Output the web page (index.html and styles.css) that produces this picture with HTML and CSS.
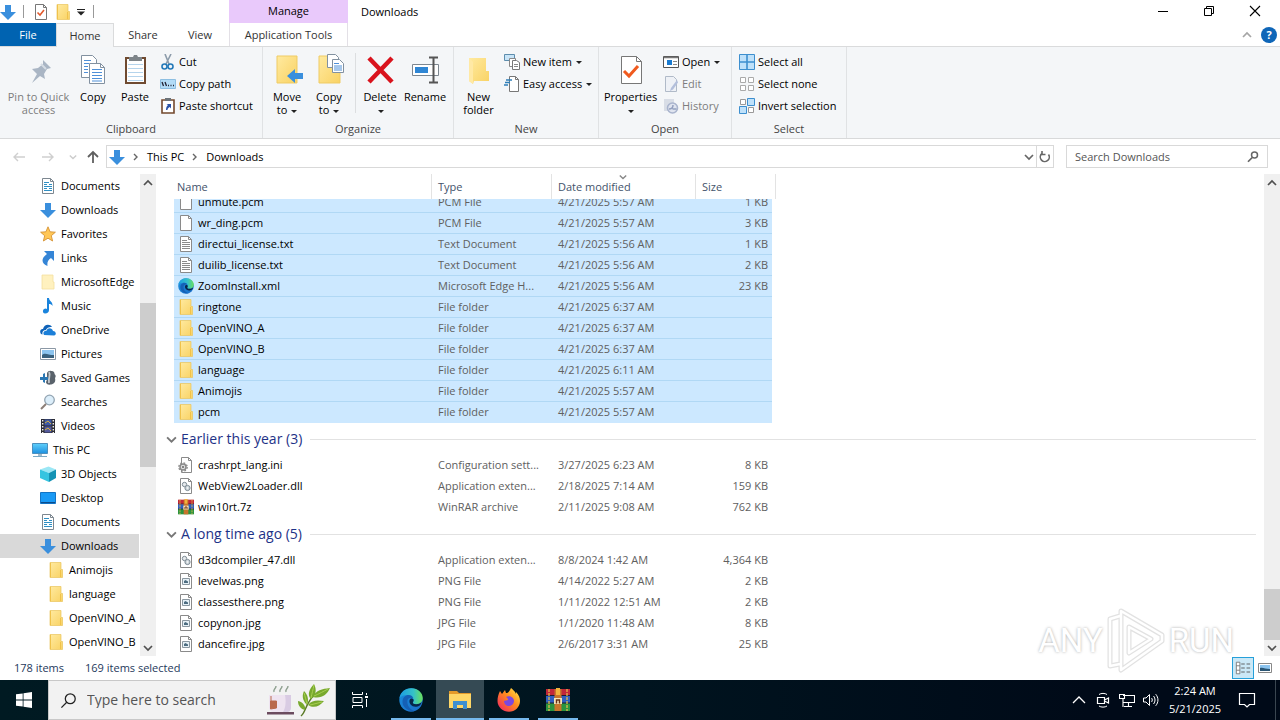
FILE: index.html
```
<!DOCTYPE html>
<html lang="en">
<head>
	<meta charset="UTF-8">
	<title>Downloads</title>
	<link rel="stylesheet" href="styles.css">
</head>
<body>
	<svg class="defs" aria-hidden="true">
		<defs>
			<linearGradient id="g-folder" x1="0" y1="0" x2="1" y2="1"><stop offset="0" stop-color="#ffeaa0"/><stop offset="1" stop-color="#f9d263"/></linearGradient>
			<linearGradient id="g-edge" x1="0" y1="0" x2="1" y2="0"><stop offset="0" stop-color="#1b9de2"/><stop offset=".6" stop-color="#35c1c8"/><stop offset="1" stop-color="#6be15c"/></linearGradient>
			<linearGradient id="g-edge2" x1="0" y1="0" x2="1" y2="1"><stop offset="0" stop-color="#1a8fdc"/><stop offset="1" stop-color="#1a6cc8"/></linearGradient>
			<linearGradient id="g-fox" x1="1" y1="0" x2="0" y2="1"><stop offset="0" stop-color="#fff04a"/><stop offset=".45" stop-color="#ff8a1e"/><stop offset="1" stop-color="#f01b6a"/></linearGradient>
			<linearGradient id="g-sky" x1="0" y1="0" x2="0" y2="1"><stop offset="0" stop-color="#5fd0fb"/><stop offset="1" stop-color="#1e90e0"/></linearGradient>
		</defs>
		<symbol id="i-down" viewBox="0 0 16 16"><path d="M5 1h6v7h5l-8 8-8-8h5z" fill="#3a8fdd"/></symbol>
		<symbol id="i-folder" viewBox="0 0 16 16"><path d="M2 .5h11v7h1.500v8H2z" fill="url(#g-folder)" stroke="#eac45c" stroke-width=".7"/><path d="M12.500 8v7M2.500 1v14" stroke="#f0c24b" stroke-width="1" fill="none"/></symbol>
		<symbol id="i-folder-pale" viewBox="0 0 16 16"><path d="M2 1h11v7h1v7H2z" fill="#fff1bf" stroke="#f4e0a0" stroke-width=".8"/></symbol>
		<symbol id="i-page" viewBox="0 0 16 16"><path d="M2.500.5h8l3 3v12h-11z" fill="#fff" stroke="#8a8a8a"/><path d="M10.500.5v3h3" fill="none" stroke="#8a8a8a"/></symbol>
		<symbol id="i-text" viewBox="0 0 16 16"><path d="M2.500.5h8l3 3v12h-11z" fill="#fff" stroke="#8a8a8a"/><path d="M10.500.5v3h3M4 4.500h5M4 6.500h8M4 8.500h8M4 10.500h8M4 12.500h8" fill="none" stroke="#8a8a8a"/></symbol>
		<symbol id="i-doc" viewBox="0 0 16 16"><path d="M2.500.5h8l3 3v12h-11z" fill="#fff" stroke="#7d8790"/><path d="M10.500.5v3h3" fill="none" stroke="#7d8790"/><path d="M4 4.500h5M4 6.500h3M9 6.500h3M4 8.500h8M4 10.500h3M9 10.500h3M4 12.500h8" stroke="#2f8fc4"/></symbol>
		<symbol id="i-gearpage" viewBox="0 0 16 16"><path d="M3.500.5h7l3 3v12h-10z" fill="#fff" stroke="#8a8a8a"/><path d="M10.500.5v3h3" fill="none" stroke="#8a8a8a"/><circle cx="5" cy="10" r="3" fill="#ddd" stroke="#8a8a8a" stroke-width="1.500"/><circle cx="5" cy="10" r="4.200" fill="none" stroke="#8a8a8a" stroke-width="1.300" stroke-dasharray="1.800 1.500"/><circle cx="5" cy="10" r="1" fill="#666"/></symbol>
		<symbol id="i-dll" viewBox="0 0 16 16"><path d="M2.500.5h8l3 3v12h-11z" fill="#fff" stroke="#8a8a8a"/><path d="M10.500.5v3h3" fill="none" stroke="#8a8a8a"/><circle cx="6.500" cy="6.500" r="2.200" fill="#e5e9ec" stroke="#7e8b94"/><circle cx="9.500" cy="10" r="2.600" fill="#cfd7dc" stroke="#7e8b94"/><circle cx="9.500" cy="10" r=".8" fill="#fff"/></symbol>
		<symbol id="i-image" viewBox="0 0 16 16"><path d="M2.500.5h8l3 3v12h-11z" fill="#fff" stroke="#8a8a8a"/><path d="M10.500.5v3h3" fill="none" stroke="#8a8a8a"/><path d="M4.500 5.500h7v6h-7z" fill="#e6f0f6" stroke="#8a97a0"/><path d="M6 8l1.500-1L10 8.500V10H6z" fill="#4c6c80"/></symbol>
		<symbol id="i-edge" viewBox="0 0 24 24"><circle cx="12" cy="12" r="11.700" fill="url(#g-edge2)"/><path d="M.5 10C1.500 4 6.500.3 12.500.3 19 .3 23.700 5 23.700 10c0 4-3 6.300-6.700 6.300-2.500 0-3.500-1-3.200-2 .8-1 1-1.700.8-2.700C14 8.500 11.500 7 8.500 7 5 7 2 8 .5 10z" fill="url(#g-edge)"/><path d="M8.500 12c-1 5 2.500 10 7.500 11C9 24 3 19 3.500 13c.2-3 2-5 5-6 3-.3 5 1 5.700 3-2.700-.7-5 0-5.700 2z" fill="#1560b5"/><path d="M10.500 12.500c.5-2 2.500-2.500 3.800-1.200.6 1 .3 2-.4 3-.3 1 1 2 3.200 2 2.200 0 4-.7 5.600-2-1 3.500-3.700 4.700-6.200 4.500-4-.3-6.500-3-6-6.300z" fill="#07264a"/></symbol>
		<symbol id="i-rar" viewBox="0 0 24 24"><path d="M0 1h24v7H0z" fill="#c0273a"/><path d="M0 8h24v7H0z" fill="#2f5fc0"/><path d="M0 15h24v8H0z" fill="#2b9440"/><path d="M0 7.500h24M0 15h24" stroke="#1c1c30"/><path d="M3 1v22M21 1v22" stroke="#e3b94a" stroke-width="1.300" stroke-dasharray="3 1"/><path d="M8.500 1h7v22h-7z" fill="#c8752b"/><path d="M10 0h4v7h-4z" fill="#f2b33d"/><path d="M8 10h8v6H8z" fill="#f5e3b6"/><path d="M10.500 15.500V12h3v3.500" fill="none" stroke="#693015" stroke-width="1.400"/></symbol>
		<symbol id="i-star" viewBox="0 0 16 16"><path d="M8 .8l2.100 5 5.300.4-4.100 3.500 1.300 5.300L8 12.200 3.400 15l1.300-5.300L.6 6.200l5.300-.4z" fill="#ffc757" stroke="#d69335" stroke-width=".9"/></symbol>
		<symbol id="i-link" viewBox="0 0 16 16"><path d="M4 1h10v10l-3-3c-3 2-4 4-3.500 8C2 14 0 9 7 4z" fill="#3585d6"/></symbol>
		<symbol id="i-music" viewBox="0 0 16 16"><path d="M7 0h2c0 3 4 3.500 3.500 8-.8-1.500-2-2-3.500-2v6c0 2-1.500 3.500-4 3.500S2.500 12 4 11s2.200-.6 3 0z" fill="#1a84dd"/></symbol>
		<symbol id="i-cloud" viewBox="0 0 16 16"><path d="M1 12C-1 9 1 6.500 3 7c1-5 7-5.500 9-2C8 5 7 6 6 8c-3 0-4 2-3.500 4.500z" fill="#0f62b8"/><path d="M4 13c-1.500-2 0-4.500 2.500-4.200C7.500 5.500 12 5.500 13 9c3 0 4 4 1 4.500z" fill="#1c7fd8"/></symbol>
		<symbol id="i-pic" viewBox="0 0 16 16"><path d="M.5 2.500h15v11H.5z" fill="#fff" stroke="#8b98a5"/><path d="M2 4h12v8H2z" fill="#8cc4ef"/><path d="M2 9c3-3 6 0 12 0v3H2z" fill="#39617e"/></symbol>
		<symbol id="i-games" viewBox="0 0 16 16"><path d="M7 3c1-2 3-2.500 4-2 2-.5 4 1 3.500 3 1.500 1 1.500 3 .5 4 1 4-1 6-4 6.500-3 .5-5-.5-5-2.500 1-2 1-3 1-5z" fill="#59626b"/><path d="M9 2c2 3-1 6 0 11" stroke="#c4cbd1" stroke-width="1.800" fill="none"/><path d="M0 7h3V4l2-1v4h3v3H5v3l-2-1v-2H0z" fill="#2b78b4"/></symbol>
		<symbol id="i-lens" viewBox="0 0 16 16"><circle cx="9.500" cy="6" r="4.800" fill="#dceefa" stroke="#93a5b3" stroke-width="1.300"/><path d="M6 10l-5 5" stroke="#8c7f78" stroke-width="2"/></symbol>
		<symbol id="i-video" viewBox="0 0 16 16"><path d="M1 1h14v14H1z" fill="#2c2c34"/><path d="M4.500 1.500h7v6h-7z" fill="#3d58a8"/><path d="M4.500 8.500h7v6h-7z" fill="#545a9d"/><path d="M5 5l3-2 3 3M5 12l3-2 3 3" stroke="#d5b23e" fill="none"/><path d="M2.700 2v13M13.300 2v13" stroke="#eee" stroke-width="1.400" stroke-dasharray="1.500 1.500"/></symbol>
		<symbol id="i-pc" viewBox="0 0 16 16"><path d="M.5 1.500h15v10H.5z" fill="url(#g-sky)" stroke="#4c90be"/><path d="M1 14.500h14" stroke="#7caac5"/><path d="M6 12h4v2H6z" fill="#a5bccb"/></symbol>
		<symbol id="i-cube" viewBox="0 0 16 16"><path d="M0 3.500L8.500.5l7.500 3-7 3.500z" fill="#9be7f5"/><path d="M0 3.500L9 7v9l-9-4z" fill="#35c4e0"/><path d="M16 3.500L9 7v9l7-4z" fill="#1493b5"/></symbol>
		<symbol id="i-desktop" viewBox="0 0 16 16"><path d="M.5 2.500h15v11H.5z" fill="#1a9af5" stroke="#1474c4"/><path d="M1 12.500h14" stroke="#0d4c8c"/></symbol>
		<symbol id="i-chev" viewBox="0 0 10 10"><path d="M1 3l4 4 4-4" fill="none" stroke="currentColor" stroke-width="1.700"/></symbol>
		<symbol id="i-chevup" viewBox="0 0 10 10"><path d="M1 7l4-4 4 4" fill="none" stroke="currentColor" stroke-width="1.700"/></symbol>
		<symbol id="i-sep" viewBox="0 0 10 10"><path d="M3 2l3 3-3 3" fill="none" stroke="#666" stroke-width="1.400"/></symbol>
		<symbol id="i-search" viewBox="0 0 24 24"><circle cx="14.500" cy="9.500" r="7" fill="none" stroke="currentColor" stroke-width="1.800"/><path d="M9.500 14.500L2 22" stroke="currentColor" stroke-width="1.800"/></symbol>
	</svg>

	<div class="window">
		<header class="titlebar">
			<div class="quick-access">
				<svg class="icon" viewBox="0 0 16 16"><use href="#i-down"/></svg>
				<i class="bar"></i>
				<button aria-label="Properties"><svg class="icon" viewBox="0 0 16 16"><path d="M2.500.5h8l3 3v12h-11z" fill="#fff" stroke="#777"/><path d="M10.500.5v3h3" fill="none" stroke="#777"/><path d="M4.500 8.500L7 11l4-5" fill="none" stroke="#e2592c" stroke-width="1.600"/></svg></button>
				<button aria-label="New folder"><svg class="icon" viewBox="0 0 16 16"><use href="#i-folder"/></svg></button>
				<button class="customize" aria-label="Customize"><svg viewBox="0 0 8 8"><path d="M0 3.500h8L4 7.500z" fill="#222"/><path d="M0 1.500h8" stroke="#222"/></svg></button>
				<i class="bar"></i>
			</div>
			<div class="context-title">Manage</div>
			<h1>Downloads</h1>
			<div class="controls">
				<button aria-label="Minimize"><svg viewBox="0 0 12 12"><path d="M1 6.500h10" stroke="#000"/></svg></button>
				<button aria-label="Restore"><svg viewBox="0 0 12 12"><path d="M1.500 3.500h7v7h-7zM3.500 3V1.500h7v7H9" fill="none" stroke="#000"/></svg></button>
				<button aria-label="Close"><svg viewBox="0 0 12 12"><path d="M1 1l10 10M11 1L1 11" stroke="#000" stroke-width="1.100"/></svg></button>
			</div>
		</header>
		<nav class="tabs">
			<button class="file">File</button>
			<button class="active">Home</button>
			<button>Share</button>
			<button>View</button>
			<button class="context">Application Tools</button>
			<div class="tab-tools">
				<svg class="chev" viewBox="0 0 10 10"><use href="#i-chevup"/></svg>
				<button class="help" aria-label="Help">?</button>
			</div>
		</nav>

		<div class="ribbon">
			<section class="group g-clipboard">
				<div class="tools">
					<button class="big disabled"><svg viewBox="0 0 32 32"><path d="M20 6l8 8-4 1-3 5 1 5-5-3-8 7 5-9-5-5 6-1 5-4z" fill="#a9b5c4"/><path d="M18 10l5 5" stroke="#d5dce4" stroke-width="2"/></svg><span>Pin to Quick<br>access</span></button>
					<button class="big"><svg viewBox="0 0 32 32"><g fill="#fff" stroke="#8291a0"><path d="M4.500 1.500h11l4 4v18h-15z"/><path d="M12.500 9.500h11l4 4v16h-15z"/><path d="M23.500 9.500v4h4" fill="none"/></g><path d="M7 6.500h7M7 9.500h5M7 12.500h4M7 15.500h4M7 18.500h4M15 15.500h10M15 18.500h10M15 21.500h10M15 24.500h10M15 27h10" stroke="#4f90d8"/></svg><span>Copy</span></button>
					<button class="big"><svg viewBox="0 0 32 32"><path d="M7 4h19v25H7z" fill="#fff" stroke="#6f4a30" stroke-width="2"/><path d="M9 10.500h15M9 14.500h15M9 18.500h15M9 22.500h15M9 26.500h15" stroke="#b5d4ec"/><path d="M10 3h4l1-2h3l1 2h4v4H10z" fill="#7d8489"/></svg><span>Paste</span></button>
					<div class="stack">
						<button><svg class="icon" viewBox="0 0 16 16"><path d="M5 0l4 10M11 0L6 10" stroke="#8d9cab" stroke-width="1.600"/><circle cx="4.500" cy="12.500" r="2.500" fill="none" stroke="#2479b8" stroke-width="1.600"/><circle cx="10.500" cy="12.500" r="2.500" fill="none" stroke="#2479b8" stroke-width="1.600"/></svg>Cut</button>
						<button><svg class="icon" viewBox="0 0 16 16"><path d="M.5 3.500h15v9H.5z" fill="#b3dcf7" stroke="#8dbfe2"/><path d="M2 6l1.500 4M5 6l1.500 4M8 9.500h1M10.500 9.500h1M13 9.500h1" stroke="#223" stroke-width="1.300"/></svg>Copy path</button>
						<button><svg class="icon" viewBox="0 0 16 16"><path d="M2 2h12v13H2z" fill="#fff" stroke="#73492e" stroke-width="1.600"/><path d="M5 0h6v3H5z" fill="#6c7379"/><path d="M6 12c0-3 1-4 2-5L6.500 6H11v4.500L9.700 9C8 10 7.500 11 7.500 12z" fill="#2a52a8"/></svg>Paste shortcut</button>
					</div>
				</div>
				<h2>Clipboard</h2>
			</section>
			<section class="group g-organize">
				<div class="tools">
					<button class="big"><svg viewBox="0 0 32 32"><path d="M6 2h20v27H6z" fill="url(#g-folder)" stroke="#efcb65"/><path d="M16 22l8-7v4h8v6h-8v4z" fill="#3a8fdd"/></svg><span>Move<br>to <b class="caret"></b></span></button>
					<button class="big"><svg viewBox="0 0 32 32"><path d="M6 2h18v10h3v17H6z" fill="url(#g-folder)" stroke="#efcb65"/><g fill="#fff" stroke="#8291a0"><path d="M14.500.5h8l3 3v10h-11z"/><path d="M19.500 5.500h7l4 4v9h-11z"/></g><path d="M21 9.500h5M21 12h8M21 14h8M21 16h8" stroke="#4f90d8"/></svg><span>Copy<br>to <b class="caret"></b></span></button>
					<i class="inner-bar"></i>
					<button class="big"><svg viewBox="0 0 32 32"><path d="M5 4l23 24M28 4L5 28" stroke="#d9131d" stroke-width="4.500"/></svg><span>Delete<br><b class="caret"></b></span></button>
					<button class="big"><svg viewBox="0 0 32 32"><path d="M3.500 10.500h26v11h-26z" fill="#fff" stroke="#7d8790"/><path d="M6 13h13v6H6z" fill="#2f86d4"/><path d="M20 3.500h4.500V28M29 3.500h-4.500M20 28.500h9" fill="none" stroke="#555" stroke-width="2"/></svg><span>Rename</span></button>
				</div>
				<h2>Organize</h2>
			</section>
			<section class="group g-new">
				<div class="tools">
					<button class="big"><svg viewBox="0 0 32 32"><path d="M6 4h17v13h3v10H11l-1 3-4-3z" fill="url(#g-folder)"/><path d="M6 4l4 4v22l-4-3z" fill="#ffe9a5"/></svg><span>New<br>folder</span></button>
					<div class="stack">
						<button><svg class="icon" viewBox="0 0 16 16"><path d="M.5.5h10v6H.5z" fill="#c8e4f7" stroke="#5d8dad"/><path d="M5.500 4.500h6v8h-6z" fill="#fff" stroke="#888"/><path d="M8.500 6.500h4l3 2v7h-7z" fill="#fff" stroke="#777"/><path d="M10 10.500h4M10 12.500h4" stroke="#888"/></svg>New item <b class="caret"></b></button>
						<button><svg class="icon" viewBox="0 0 16 16"><path d="M5.500.5h6l3 3v12h-9z" fill="#fff" stroke="#777"/><path d="M11.500.5v3h3" fill="none" stroke="#777"/><path d="M2 4h6M1 6.500h5M0 9h4" stroke="#2f7fb8" stroke-width="1.300"/></svg>Easy access <b class="caret"></b></button>
					</div>
				</div>
				<h2>New</h2>
			</section>
			<section class="group g-open">
				<div class="tools">
					<button class="big"><svg viewBox="0 0 32 32"><path d="M6.500 2.500h15l5 5v22h-20z" fill="#fff" stroke="#777"/><path d="M21.500 2.500v5h5" fill="none" stroke="#777"/><path d="M9 17l5 5 9-10" fill="none" stroke="#f05a1e" stroke-width="3"/></svg><span>Properties<br><b class="caret"></b></span></button>
					<div class="stack">
						<button><svg class="icon" viewBox="0 0 16 16"><path d="M.5 2.500h15v11H.5z" fill="#fff" stroke="#555"/><path d="M1 3.500h14" stroke="#777" stroke-width="1.500"/><path d="M4 6h5v5H4z" fill="#1a7bd0"/><path d="M10 7.500h4M10 10.500h4" stroke="#888"/></svg>Open <b class="caret"></b></button>
						<button class="disabled"><svg class="icon" viewBox="0 0 16 16"><path d="M2.500.5h8l3 3v12h-11z" fill="#eef1f6" stroke="#b0bac8"/><path d="M14 4l-6 8-1 3 3-1.500 5-7z" fill="#b3bfdb"/></svg>Edit</button>
						<button class="disabled"><svg class="icon" viewBox="0 0 16 16"><path d="M1 1h10v4h2v8H1z" fill="#d8dde6"/><circle cx="9.500" cy="10" r="5" fill="#dfe4ef" stroke="#a9b4cd" stroke-width="1.600"/><path d="M6 11c2 0 4-1 4-4M9.500 11h4" stroke="#93a0bf" fill="none" stroke-width="1.500"/></svg>History</button>
					</div>
				</div>
				<h2>Open</h2>
			</section>
			<section class="group g-select">
				<div class="tools">
					<div class="stack">
						<button><svg class="icon" viewBox="0 0 16 16"><path d="M.5.5h15v15H.5z" fill="#bfe1fa" stroke="#3d8fcf"/><path d="M8 0v16M0 8h16" stroke="#3d8fcf" stroke-width="1.600"/></svg>Select all</button>
						<button><svg class="icon" viewBox="0 0 16 16"><path d="M1.500 1.500h5v5h-5zM9.500 1.500h5v5h-5zM1.500 9.500h5v5h-5zM9.500 9.500h5v5h-5z" fill="#fff" stroke="#aaa"/></svg>Select none</button>
						<button><svg class="icon" viewBox="0 0 16 16"><path d="M1.500 1.500h5v5h-5zM9.500 9.500h5v5h-5z" fill="#fff" stroke="#999"/><path d="M8.500.5h7v7h-7zM.5 8.500h7v7h-7z" fill="#bfe1fa" stroke="#3d8fcf"/></svg>Invert selection</button>
					</div>
				</div>
				<h2>Select</h2>
			</section>
		</div>

		<div class="address-row">
			<div class="history">
				<button aria-label="Back"><svg viewBox="0 0 14 14"><path d="M13 7H2M6 3L2 7l4 4" fill="none" stroke="#cfcfcf" stroke-width="1.400"/></svg></button>
				<button aria-label="Forward"><svg viewBox="0 0 14 14"><path d="M1 7h11M8 3l4 4-4 4" fill="none" stroke="#cfcfcf" stroke-width="1.400"/></svg></button>
				<button class="recent" aria-label="Recent locations"><svg viewBox="0 0 10 10"><use href="#i-chev"/></svg></button>
				<button aria-label="Up"><svg viewBox="0 0 14 14"><path d="M7 13V2M2 7l5-5 5 5" fill="none" stroke="#5f5f5f" stroke-width="1.800"/></svg></button>
			</div>
			<div class="address">
				<svg class="icon" viewBox="0 0 16 16"><use href="#i-down"/></svg>
				<svg class="sep" viewBox="0 0 10 10"><use href="#i-sep"/></svg>
				<a href="#">This PC</a>
				<svg class="sep" viewBox="0 0 10 10"><use href="#i-sep"/></svg>
				<a href="#">Downloads</a>
				<button class="drop" aria-label="Previous locations"><svg viewBox="0 0 10 10"><use href="#i-chev"/></svg></button>
				<button class="refresh" aria-label="Refresh"><svg viewBox="0 0 12 12"><path d="M3 2.500A4.500 4.500 0 1 0 9.500 3.500M3 0v3.500h3.500" fill="none" stroke="#666" stroke-width="1.600"/></svg></button>
			</div>
			<label class="find">
				<input type="text" placeholder="Search Downloads" aria-label="Search Downloads">
				<svg viewBox="0 0 24 24"><circle cx="15" cy="8" r="6" fill="none" stroke="#666" stroke-width="3"/><path d="M10.500 13L2 21.500" stroke="#666" stroke-width="3.500"/></svg>
			</label>
		</div>

		<div class="content">
			<ul class="tree">
				<li><a href="#"><svg class="icon" viewBox="0 0 16 16"><use href="#i-doc"/></svg>Documents</a></li>
				<li><a href="#"><svg class="icon" viewBox="0 0 16 16"><use href="#i-down"/></svg>Downloads</a></li>
				<li><a href="#"><svg class="icon" viewBox="0 0 16 16"><use href="#i-star"/></svg>Favorites</a></li>
				<li><a href="#"><svg class="icon" viewBox="0 0 16 16"><use href="#i-link"/></svg>Links</a></li>
				<li><a href="#"><svg class="icon" viewBox="0 0 16 16"><use href="#i-folder-pale"/></svg>MicrosoftEdge</a></li>
				<li><a href="#"><svg class="icon" viewBox="0 0 16 16"><use href="#i-music"/></svg>Music</a></li>
				<li><a href="#"><svg class="icon" viewBox="0 0 16 16"><use href="#i-cloud"/></svg>OneDrive</a></li>
				<li><a href="#"><svg class="icon" viewBox="0 0 16 16"><use href="#i-pic"/></svg>Pictures</a></li>
				<li><a href="#"><svg class="icon" viewBox="0 0 16 16"><use href="#i-games"/></svg>Saved Games</a></li>
				<li><a href="#"><svg class="icon" viewBox="0 0 16 16"><use href="#i-lens"/></svg>Searches</a></li>
				<li><a href="#"><svg class="icon" viewBox="0 0 16 16"><use href="#i-video"/></svg>Videos</a></li>
				<li class="root"><a href="#"><svg class="icon" viewBox="0 0 16 16"><use href="#i-pc"/></svg>This PC</a></li>
				<li><a href="#"><svg class="icon" viewBox="0 0 16 16"><use href="#i-cube"/></svg>3D Objects</a></li>
				<li><a href="#"><svg class="icon" viewBox="0 0 16 16"><use href="#i-desktop"/></svg>Desktop</a></li>
				<li><a href="#"><svg class="icon" viewBox="0 0 16 16"><use href="#i-doc"/></svg>Documents</a></li>
				<li class="current"><a href="#"><svg class="icon" viewBox="0 0 16 16"><use href="#i-down"/></svg>Downloads</a></li>
				<li class="sub"><a href="#"><svg class="icon" viewBox="0 0 16 16"><use href="#i-folder"/></svg>Animojis</a></li>
				<li class="sub"><a href="#"><svg class="icon" viewBox="0 0 16 16"><use href="#i-folder"/></svg>language</a></li>
				<li class="sub"><a href="#"><svg class="icon" viewBox="0 0 16 16"><use href="#i-folder"/></svg>OpenVINO_A</a></li>
				<li class="sub"><a href="#"><svg class="icon" viewBox="0 0 16 16"><use href="#i-folder"/></svg>OpenVINO_B</a></li>
			</ul>
			<div class="scrollbar tree-scroll">
				<svg viewBox="0 0 10 10"><use href="#i-chevup"/></svg>
				<div class="track"><div class="thumb"></div></div>
				<svg viewBox="0 0 10 10"><use href="#i-chev"/></svg>
			</div>
			<div class="files" id="files">
				<table>
					<colgroup><col class="c-gutter"><col class="c-name"><col class="c-type"><col class="c-date"><col class="c-size"><col class="c-end"><col></colgroup>
					<thead>
						<tr><th></th><th>Name</th><th>Type</th><th class="sorted">Date modified<svg viewBox="0 0 10 10"><use href="#i-chev"/></svg></th><th colspan="2">Size</th><th></th></tr>
					</thead>
					<tbody class="selected">
						<tr><td></td><td><svg class="icon" viewBox="0 0 16 16"><use href="#i-page"/></svg>unmute.pcm</td><td>PCM File</td><td>4/21/2025 5:57 AM</td><td>1 KB</td></tr>
						<tr><td></td><td><svg class="icon" viewBox="0 0 16 16"><use href="#i-page"/></svg>wr_ding.pcm</td><td>PCM File</td><td>4/21/2025 5:57 AM</td><td>3 KB</td></tr>
						<tr><td></td><td><svg class="icon" viewBox="0 0 16 16"><use href="#i-text"/></svg>directui_license.txt</td><td>Text Document</td><td>4/21/2025 5:56 AM</td><td>1 KB</td></tr>
						<tr><td></td><td><svg class="icon" viewBox="0 0 16 16"><use href="#i-text"/></svg>duilib_license.txt</td><td>Text Document</td><td>4/21/2025 5:56 AM</td><td>2 KB</td></tr>
						<tr><td></td><td><svg class="icon" viewBox="0 0 24 24"><use href="#i-edge"/></svg>ZoomInstall.xml</td><td>Microsoft Edge H...</td><td>4/21/2025 5:56 AM</td><td>23 KB</td></tr>
						<tr><td></td><td><svg class="icon" viewBox="0 0 16 16"><use href="#i-folder"/></svg>ringtone</td><td>File folder</td><td>4/21/2025 6:37 AM</td><td></td></tr>
						<tr><td></td><td><svg class="icon" viewBox="0 0 16 16"><use href="#i-folder"/></svg>OpenVINO_A</td><td>File folder</td><td>4/21/2025 6:37 AM</td><td></td></tr>
						<tr><td></td><td><svg class="icon" viewBox="0 0 16 16"><use href="#i-folder"/></svg>OpenVINO_B</td><td>File folder</td><td>4/21/2025 6:37 AM</td><td></td></tr>
						<tr><td></td><td><svg class="icon" viewBox="0 0 16 16"><use href="#i-folder"/></svg>language</td><td>File folder</td><td>4/21/2025 6:11 AM</td><td></td></tr>
						<tr><td></td><td><svg class="icon" viewBox="0 0 16 16"><use href="#i-folder"/></svg>Animojis</td><td>File folder</td><td>4/21/2025 5:57 AM</td><td></td></tr>
						<tr><td></td><td><svg class="icon" viewBox="0 0 16 16"><use href="#i-folder"/></svg>pcm</td><td>File folder</td><td>4/21/2025 5:57 AM</td><td></td></tr>
					</tbody>
					<tbody>
						<tr class="group-row"><th colspan="7"><div><svg viewBox="0 0 10 10"><use href="#i-chev"/></svg>Earlier this year (3)</div></th></tr>
						<tr><td></td><td><svg class="icon" viewBox="0 0 16 16"><use href="#i-gearpage"/></svg>crashrpt_lang.ini</td><td>Configuration sett...</td><td>3/27/2025 6:23 AM</td><td>8 KB</td></tr>
						<tr><td></td><td><svg class="icon" viewBox="0 0 16 16"><use href="#i-dll"/></svg>WebView2Loader.dll</td><td>Application exten...</td><td>2/18/2025 7:14 AM</td><td>159 KB</td></tr>
						<tr><td></td><td><svg class="icon" viewBox="0 0 24 24"><use href="#i-rar"/></svg>win10rt.7z</td><td>WinRAR archive</td><td>2/11/2025 9:08 AM</td><td>762 KB</td></tr>
					</tbody>
					<tbody>
						<tr class="group-row"><th colspan="7"><div><svg viewBox="0 0 10 10"><use href="#i-chev"/></svg>A long time ago (5)</div></th></tr>
						<tr><td></td><td><svg class="icon" viewBox="0 0 16 16"><use href="#i-dll"/></svg>d3dcompiler_47.dll</td><td>Application exten...</td><td>8/8/2024 1:42 AM</td><td>4,364 KB</td></tr>
						<tr><td></td><td><svg class="icon" viewBox="0 0 16 16"><use href="#i-image"/></svg>levelwas.png</td><td>PNG File</td><td>4/14/2022 5:27 AM</td><td>2 KB</td></tr>
						<tr><td></td><td><svg class="icon" viewBox="0 0 16 16"><use href="#i-image"/></svg>classesthere.png</td><td>PNG File</td><td>1/11/2022 12:51 AM</td><td>2 KB</td></tr>
						<tr><td></td><td><svg class="icon" viewBox="0 0 16 16"><use href="#i-image"/></svg>copynon.jpg</td><td>JPG File</td><td>1/1/2020 11:48 AM</td><td>8 KB</td></tr>
						<tr><td></td><td><svg class="icon" viewBox="0 0 16 16"><use href="#i-image"/></svg>dancefire.jpg</td><td>JPG File</td><td>2/6/2017 3:31 AM</td><td>25 KB</td></tr>
					</tbody>
				</table>
			</div>
			<div class="scrollbar list-scroll">
				<svg viewBox="0 0 10 10"><use href="#i-chevup"/></svg>
				<div class="track"><div class="thumb"></div></div>
				<svg viewBox="0 0 10 10"><use href="#i-chev"/></svg>
			</div>
		</div>

		<footer class="status">
			<span>178 items</span>
			<span>169 items selected</span>
			<div class="views">
				<button class="on" aria-label="Details"><svg viewBox="0 0 18 16"><path d="M1.500 1.500h4v13h-4zM1.500 5.500h4M1.500 10.500h4" fill="#fff" stroke="#777"/><path d="M7 3.500h4M13 3.500h4M7 8h4M13 8h4M7 12.500h4M13 12.500h4" stroke="#555"/></svg></button>
				<button aria-label="Large icons"><svg viewBox="0 0 16 16"><path d="M1.500 3.500h13v9h-13z" fill="#fff" stroke="#888"/><path d="M3 5h10v6H3z" fill="#8cc4ef"/><path d="M3 8c3-1 5 1 10 1v2H3z" fill="#2b5674"/></svg></button>
			</div>
		</footer>
	</div>

	<div class="watermark">
		<span>ANY</span>
		<svg viewBox="0 0 58 66"><g fill="none" stroke-linejoin="round"><path d="M13 8L3 11v47l10-2M14 3l41 24v6L14 62V3zm8 16l22 12-22 14z" stroke="#e2e2e2" stroke-width="5"/><path d="M13 8L3 11v47l10-2M14 3l41 24v6L14 62V3zm8 16l22 12-22 14z" stroke="#fff" stroke-width="2.500"/></g></svg>
		<span>RUN</span>
	</div>

	<div class="taskbar">
		<button class="start" aria-label="Start"><svg viewBox="0 0 16 16"><path d="M0 2.300L6.700 1.400v6.200H0zM7.500 1.300L16 0v7.600H7.500zM0 8.400h6.700v6.200L0 13.700zM7.500 8.400H16V16l-8.500-1.300z" fill="#fff"/></svg></button>
		<label class="task-search">
			<svg viewBox="0 0 24 24"><use href="#i-search"/></svg>
			<input type="text" placeholder="Type here to search" aria-label="Type here to search">
			<svg class="art" viewBox="0 0 64 34"><path d="M2 12h22v12c0 4-2 5-4 5H7c-3 0-5-2-5-5z" fill="#eee3f0"/><path d="M18 12h6v12c0 4-2 5-4 5h-4c3-4 3-12 2-17z" fill="#d9cbe3"/><path d="M4 13v6M3.500 18h6v7l-6 1z" fill="#b9694c" stroke="#b9694c"/><path d="M0 29h27v2.500H0z" fill="#6b4b5e"/><path d="M7 9c-1-3 2-3 2-6M13 9c-1-3 2-3 2-6M19 9c-1-3 2-3 2-6" fill="none" stroke="#8fa090" stroke-width="1.400"/><path d="M34 33c5-4 4-12 14-22" fill="none" stroke="#5b7a27" stroke-width="1.500"/><path d="M44 16c-4-4-2-10 3-15 3 6 2 11-3 15zM40 22c-3-3-6-8-3-14 4 4 5 9 3 14zM38 27c-4-1-7-4-7-9 5 1 8 5 7 9zM46 14c3-7 9-8 17-9-3 7-9 11-17 9zM41 22c4-5 9-5 16-4-4 5-10 8-16 4z" fill="#78a92e"/><path d="M44 15c1-5 2-8 3-13M40 21c-1-4-2-8-3-11M47 13c5-2 10-5 14-7M43 22c4-1 8-2 12-3" fill="none" stroke="#a8cf52"/></svg>
		</label>
		<div class="apps">
			<button aria-label="Task view"><svg class="view" viewBox="0 0 16 16"><path d="M.5 0v2.500h10V0M.5 16v-2.500h10V16M1 5.500h9v5H1zM14.500 1v2M14.500 7v8" fill="none" stroke="#fff"/><path d="M13 4h3v2h-3z" fill="#fff"/></svg></button>
			<button class="open" aria-label="Edge"><svg viewBox="0 0 24 24"><use href="#i-edge"/></svg></button>
			<button class="open focus" aria-label="File Explorer"><svg viewBox="0 0 24 24"><path d="M1 3h8l2 2h12v5H1z" fill="#e39a2a"/><path d="M1 6h22v14H1z" fill="#fdd667"/><path d="M5 21v-8h14v8h-4v-4H9v4z" fill="#3d8fd0"/></svg></button>
			<button class="open" aria-label="Firefox"><svg viewBox="0 0 24 24"><path d="M3 3l2 3 3-4 1 3c2 0 3-1 5-5 2 2 4 3 5 6V4c3 3 4 6 4 9 0 6-5 10.800-11 10.800S.5 19 .5 13c0-4 1-7 2.500-10z" fill="url(#g-fox)"/><path d="M9 9c3-2 8 0 8 4 0 3-3 5-5.500 5C9 18 7 15.500 7 13l4-1c0-2-1-2-2-3z" fill="#7b48e0"/></svg></button>
			<button class="open" aria-label="WinRAR"><svg viewBox="0 0 24 24"><use href="#i-rar"/></svg></button>
		</div>
		<div class="tray">
			<button aria-label="Show hidden icons"><svg viewBox="0 0 16 16"><path d="M2 11l6-6 6 6" fill="none" stroke="#fff" stroke-width="1.300"/></svg></button>
			<button aria-label="Meet now"><svg viewBox="0 0 16 16"><path d="M2.500 5.500h7v6h-7zM9.500 8l4-2v5l-4-2" fill="none" stroke="#fff" stroke-width="1.200"/><path d="M4 2.500c2-1.500 6-1.500 8 0M4 14c2 1.500 6 1.500 8 0" fill="none" stroke="#fff"/></svg></button>
			<button aria-label="Network"><svg viewBox="0 0 16 16"><path d="M4 3.500h11.500v7H4M4 15V7M9.500 11v3M5 14.500h8M.5 2.500h5v4h-5z" fill="none" stroke="#fff" stroke-width="1.100"/></svg></button>
			<button aria-label="Volume"><svg viewBox="0 0 16 16"><path d="M.5 6H3l3.500-3.500v11L3 10H.5zM8.500 6c1 1 1 3 0 4M10.500 4c2 2.500 2 5.500 0 8M12.700 2.200c3 3.500 3 8 0 11.600" fill="none" stroke="#fff"/></svg></button>
		</div>
		<div class="clock">2:24 AM<br>5/21/2025</div>
		<button class="notify" aria-label="Notifications"><svg viewBox="0 0 18 18"><path d="M1.500 2.500h15v11h-5L9 16l-2.500-2.500h-5z" fill="none" stroke="#fff" stroke-width="1.200"/></svg></button>
		<i class="peek"></i>
	</div>
	<script>
		// the list opens slightly scrolled, under the column headings
		document.getElementById('files').scrollTop = 7;
	</script>
</body>
</html>
```
FILE: styles.css
```
*{
	box-sizing: border-box;
}
body,ul,h1,h2{
	margin: 0;
	padding: 0;
}
body{
	display: flex;
	flex-direction: column;
	height: 100vh;
	overflow: hidden;
	background: #fff;
	color: #000;
	font: 11px/16px "Open Sans", "Noto Sans", sans-serif;
}
ul{
	list-style: none;
}
a{
	color: inherit;
	text-decoration: none;
}
h1,h2{
	font-size: 11px;
	font-weight: normal;
}
button{
	display: flex;
	align-items: center;
	padding: 0;
	border: 0;
	background: none;
	color: inherit;
	font: inherit;
}
input{
	flex: 1;
	min-width: 0;
	padding: 0;
	border: 0;
	outline: 0;
	background: none;
	font: inherit;
}
svg{
	display: block;
	flex: none;
}
.defs{
	position: absolute;
	width: 0;
	height: 0;
}
.icon{
	width: 16px;
	height: 16px;
}
.window{
	display: flex;
	flex: 1;
	flex-direction: column;
	min-height: 0;
}

/* title bar */
.titlebar{
	display: flex;
	height: 23px;
}
.quick-access{
	display: flex;
	align-items: center;
	width: 229px;
}
.quick-access button{
	margin-right: 6px;
}
.quick-access .bar{
	width: 1px;
	height: 13px;
	margin: 0 9px 0 7px;
	background: #999;
}
.quick-access .customize{
	margin: 0 1px 0 0;
}
.customize svg{
	width: 8px;
	height: 8px;
}
.context-title{
	width: 119px;
	background: #e9c9fb;
	line-height: 21px;
	text-align: center;
}
.titlebar h1{
	padding-left: 13px;
	line-height: 24px;
}
.controls{
	display: flex;
	margin-left: auto;
	padding-right: 2px;
}
.controls button{
	justify-content: center;
	width: 46px;
	height: 21px;
}
.controls svg{
	width: 12px;
	height: 12px;
}

/* tabs */
.tabs{
	display: flex;
	height: 24px;
	border-bottom: 1px solid #dadbdc;
}
.tabs button{
	justify-content: center;
	width: 56px;
	height: 24px;
	color: #333;
}
.tabs .file{
	height: 23px;
	background: #0063b1;
	color: #fff;
}
.tabs .active{
	width: 58px;
	border: 1px solid #dadbdc;
	border-bottom: 0;
	background: #f5f6f7;
}
.tabs .active + button{
	width: 58px;
}
.tabs .context{
	width: 119px;
	height: 23px;
	margin-left: 1px;
	border: 1px solid #e3e0e6;
	border-width: 0 1px;
}
.tab-tools{
	display: flex;
	align-items: center;
	gap: 9px;
	margin-left: auto;
	padding-right: 3px;
	color: #a5a5a5;
}
.tab-tools .chev{
	width: 10px;
	height: 10px;
}
.tabs .help{
	width: 16px;
	height: 16px;
	border-radius: 50%;
	background: #0f66b8;
	color: #fff;
	font-weight: bold;
}

/* ribbon */
.ribbon{
	display: flex;
	height: 92px;
	border-bottom: 1px solid #d8d9da;
	background: #f4f6f8;
}
.group{
	display: flex;
	flex-direction: column;
	justify-content: space-between;
	border-right: 1px solid #e0e2e4;
}
.group h2{
	padding-bottom: 1px;
	color: #444;
	text-align: center;
}
.tools{
	display: flex;
	padding: 4px 0 0 3px;
}
.g-clipboard{
	width: 263px;
}
.g-clipboard .tools{
	padding-left: 5px;
}
.g-organize{
	width: 191px;
}
.g-new{
	width: 145px;
}
.g-open{
	width: 133px;
}
.g-select{
	width: 115px;
}
.big{
	flex-direction: column;
	width: 42px;
	padding-top: 3px;
	line-height: 13px;
	text-align: center;
}
.big svg{
	width: 32px;
	height: 32px;
	margin-bottom: 4px;
}
.big span{
	min-height: 26px;
	white-space: nowrap;
}
.big:last-child{
	width: 48px;
}
.g-clipboard .disabled{
	width: 67px;
}
.g-new .big{
	width: 43px;
}
.g-open .big{
	width: 57px;
}
.disabled{
	color: #7d7d7d;
}
.inner-bar{
	width: 1px;
	height: 60px;
	margin: 2px 3px 0 5px;
	background: #dcdee0;
}
.stack{
	padding-left: 4px;
}
.stack button{
	gap: 3px;
	height: 22px;
	white-space: nowrap;
}
.caret{
	display: inline-block;
	margin-left: 1px;
	border: 3px solid transparent;
	border-top-color: #222;
	border-bottom: 0;
	vertical-align: middle;
}

/* address bar */
.address-row{
	display: flex;
	gap: 12px;
	padding: 6px 12px 6px 0;
}
.history{
	display: flex;
	align-items: center;
	gap: 15px;
	width: 94px;
	padding-left: 12px;
	color: #ccc;
}
.history svg{
	width: 14px;
	height: 14px;
}
.history .recent{
	margin: 0 -6px 0 -1px;
}
.history .recent svg{
	width: 8px;
	height: 8px;
}
.address,.find{
	display: flex;
	align-items: center;
	height: 23px;
	border: 1px solid #d9d9d9;
}
.address{
	flex: 1;
	gap: 6px;
	padding-left: 2px;
}
.sep{
	width: 10px;
	height: 10px;
}
.address .drop{
	margin-left: auto;
	color: #666;
}
.drop svg{
	width: 10px;
	height: 10px;
}
.refresh{
	justify-content: center;
	align-self: stretch;
	width: 17px;
	margin-left: -4px;
	border-left: 1px solid #d9d9d9;
}
.refresh svg{
	width: 12px;
	height: 12px;
}
.find{
	width: 202px;
	padding: 0 8px;
}
.find svg{
	width: 12px;
	height: 12px;
}
::placeholder{
	color: #555;
	opacity: 1;
}

/* folder tree */
.content{
	display: flex;
	flex: 1;
	min-height: 0;
}
.tree{
	width: 139px;
	margin-right: 1px;
	overflow: hidden;
}
.tree a{
	display: flex;
	align-items: center;
	gap: 5px;
	height: 24px;
	padding-left: 40px;
	white-space: nowrap;
}
.tree .root a{
	padding-left: 32px;
}
.tree .sub a{
	padding-left: 48px;
}
.tree .current{
	background: #d9d9d9;
}
.scrollbar{
	display: flex;
	flex-direction: column;
	align-items: center;
	width: 16px;
	padding: 4px 0 3px;
	background: #f0f0f0;
	color: #505050;
}
.scrollbar svg{
	width: 10px;
	height: 10px;
}
.track{
	display: flex;
	flex: 1;
	flex-direction: column;
	align-self: stretch;
}
.thumb{
	background: #cdcdcd;
}
.tree-scroll .thumb{
	height: 36%;
	margin-top: 115px;
}
.list-scroll .thumb{
	height: 51px;
	margin: auto 0 3px;
}

/* file list */
.files{
	flex: 1;
	min-width: 0;
	overflow: hidden;
}
.files table{
	width: 100%;
	margin-bottom: 20px;
	border-spacing: 0;
	table-layout: fixed;
}
.c-gutter{
	width: 18px;
}
.c-name{
	width: 258px;
}
.c-type{
	width: 120px;
}
.c-date{
	width: 144px;
}
.c-size{
	width: 76px;
}
.c-end{
	width: 4px;
}
.files th{
	padding: 0;
	font-weight: normal;
	text-align: left;
}
.files thead th{
	position: sticky;
	top: 0;
	z-index: 1;
	height: 25px;
	padding-left: 6px;
	border-right: 1px solid #e3e3e3;
	background: #fff;
	color: #43536b;
}
.files thead th:first-child,.files thead th:last-child{
	border-right: 0;
}
.files thead th:nth-child(2){
	padding-left: 3px;
}
.sorted svg{
	position: absolute;
	top: -1px;
	left: 67px;
	width: 8px;
	height: 8px;
	color: #888;
}
.files td{
	height: 21px;
	padding: 0 0 0 6px;
	border-bottom: 1px solid transparent;
	color: #606060;
	line-height: 20px;
	white-space: nowrap;
}
.files td:nth-child(2){
	padding-left: 4px;
	color: #000;
}
.files td:nth-child(5){
	padding: 0 4px 0 0;
	text-align: right;
}
.files .icon{
	float: left;
	margin: 2px 4px 0 0;
}
.selected td + td{
	border-color: #b0d8f5;
	background: #cce8ff;
}
.selected tr:last-child td{
	border-color: #cce8ff;
}
.selected tr:last-child td:first-child{
	border-color: transparent;
}
.group-row div{
	display: flex;
	align-items: center;
	gap: 4px;
	height: 32px;
	padding: 0 8px 0 10px;
	color: #1e3287;
	font-size: 14px;
}
.group-row svg{
	width: 11px;
	height: 11px;
	color: #777;
}
.group-row div:after{
	flex: 1;
	height: 1px;
	margin-left: 4px;
	background: #e2e2e2;
	content: "";
}

/* status bar */
.status{
	display: flex;
	align-items: center;
	gap: 21px;
	height: 24px;
	padding: 0 5px 0 14px;
	color: #1e395b;
}
.views{
	display: flex;
	gap: 1px;
	margin-left: auto;
}
.views button{
	justify-content: center;
	width: 20px;
	height: 22px;
}
.views .on{
	width: 22px;
	border: 1px solid #26a0da;
	background: #cbe8f6;
}
.views svg{
	width: 16px;
	height: 16px;
}
.watermark{
	position: absolute;
	right: 46px;
	bottom: 46px;
	display: flex;
	align-items: center;
	gap: 4px;
	color: #fff;
	font: 33px/44px "Roboto", sans-serif;
	text-shadow: 0 0 3px #aaa;
}
.watermark svg{
	width: 58px;
	height: 66px;
}

/* taskbar */
.taskbar{
	display: flex;
	height: 40px;
	background: linear-gradient(90deg, #001a22, #00141f 50%, #000a18 85%);
	color: #fff;
}
.start{
	justify-content: center;
	width: 48px;
}
.start svg{
	width: 16px;
	height: 16px;
}
.task-search{
	display: flex;
	align-items: center;
	width: 288px;
	padding: 0 4px 0 11px;
	border: 1px solid #c8c8c8;
	background: #f2f2f2;
	color: #222;
	font-size: 14px;
}
.task-search svg{
	width: 17px;
	height: 17px;
	margin-right: 10px;
}
.task-search .art{
	width: 64px;
	height: 34px;
	margin-right: 0;
}
.apps{
	display: flex;
	gap: 1px;
}
.apps button{
	position: relative;
	justify-content: center;
	width: 48px;
}
.apps button:first-child{
	margin-right: 2px;
}
.apps svg{
	width: 24px;
	height: 24px;
}
.apps .view{
	width: 16px;
	height: 16px;
}
.apps .open:after{
	position: absolute;
	right: 4px;
	bottom: 0;
	left: 4px;
	height: 2px;
	background: #76b9ed;
	content: "";
}
.apps .focus{
	background: #354a54;
}
.apps .focus:after{
	right: 0;
	left: 0;
}
.tray{
	display: flex;
	gap: 8px;
	margin-left: auto;
}
.tray svg{
	width: 16px;
	height: 16px;
}
.clock{
	width: 72px;
	padding-top: 2px;
	line-height: 18px;
	text-align: center;
}
.notify{
	justify-content: center;
	width: 32px;
}
.notify svg{
	width: 18px;
	height: 18px;
}
.peek{
	width: 5px;
	margin-left: 12px;
	border-left: 1px solid #3a4650;
}
```
